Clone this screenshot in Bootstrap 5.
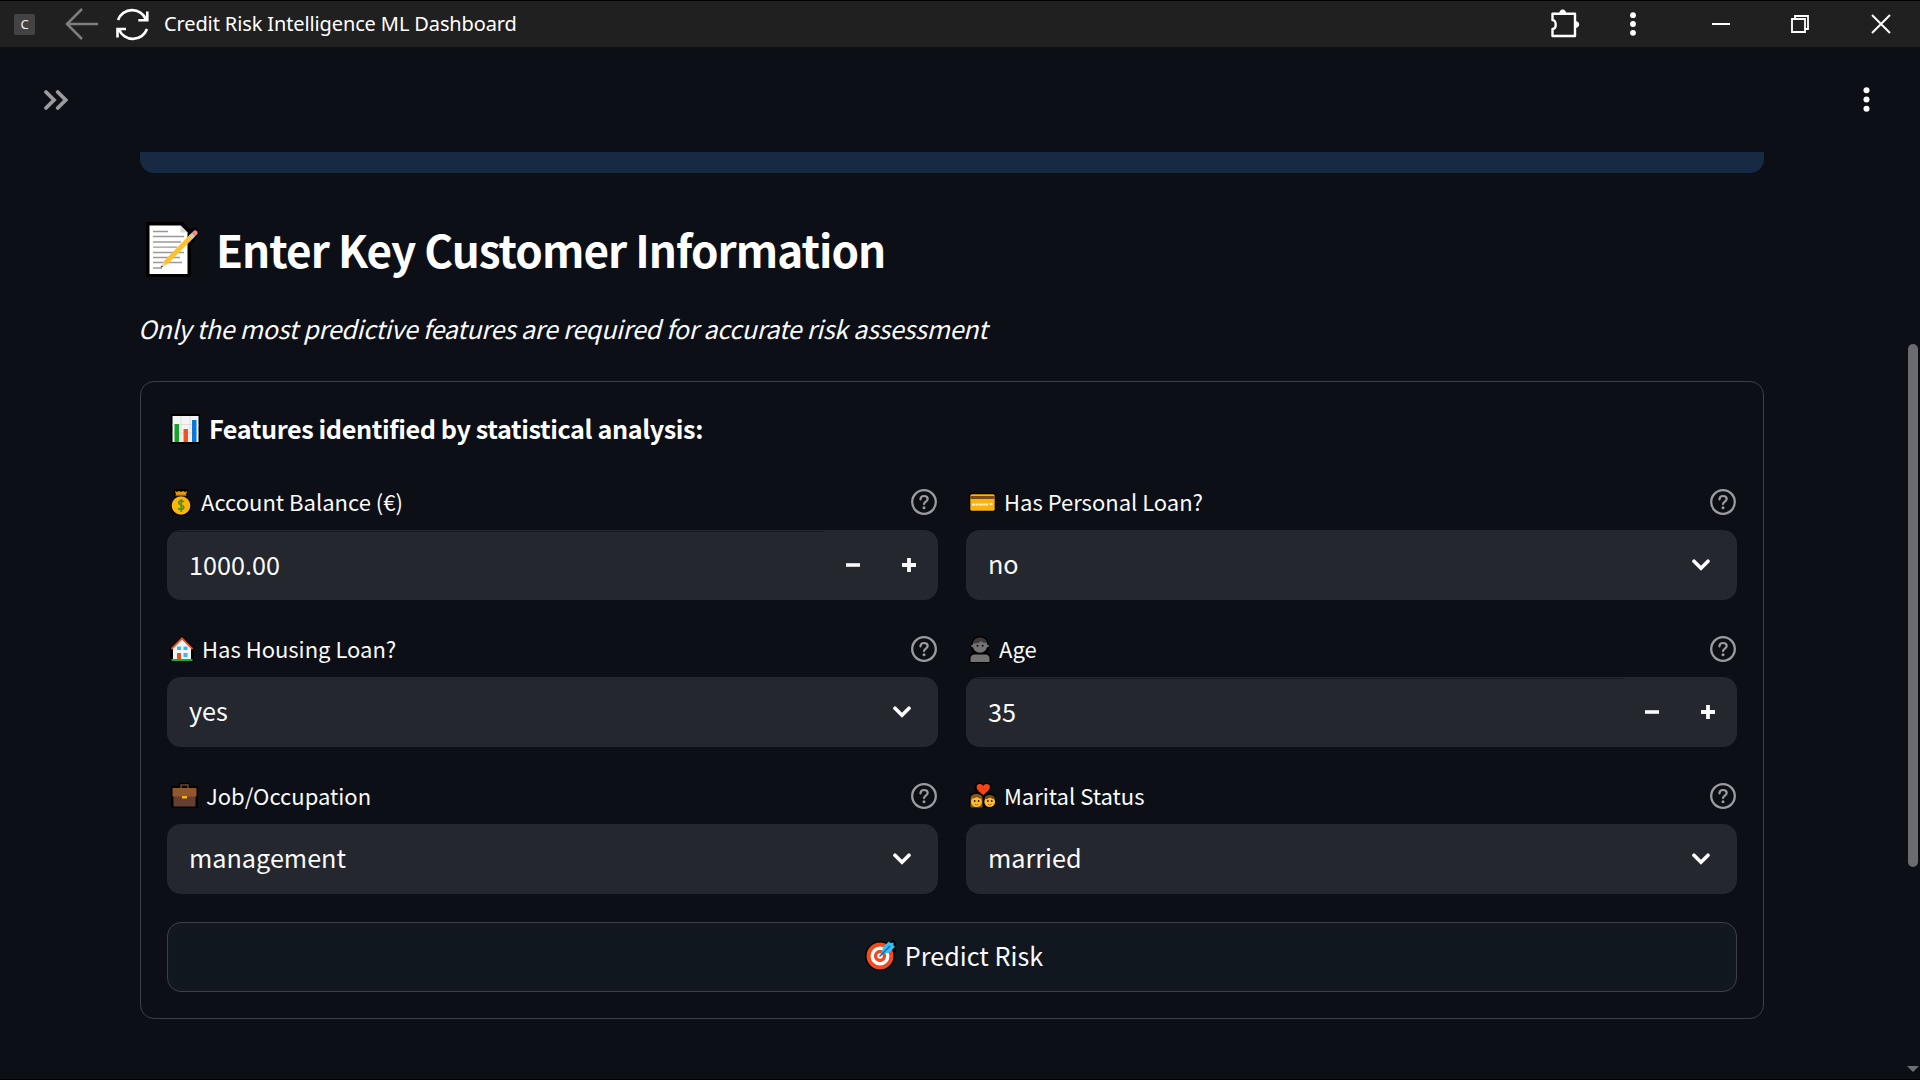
<!DOCTYPE html>
<html lang="en" data-bs-theme="dark">
<head>
<meta charset="utf-8">
<meta name="viewport" content="width=device-width, initial-scale=1">
<title>Credit Risk Intelligence ML Dashboard</title>
<link href="https://cdn.jsdelivr.net/npm/bootstrap@5.3.0/dist/css/bootstrap.min.css" rel="stylesheet">
<style>
  body { width: 1920px; height: 1080px; background: #0c0f16; color: #fafafa; font-family: "Noto Sans CJK SC", "Noto Sans", sans-serif; border-bottom: 1px solid #000; }
  svg { display: block; flex: none; overflow: visible; }
  .titlebar { height: 47px; background: #1f201f; border-top: 1px solid #000; font-family: "Noto Sans", sans-serif; }
  .app-letter { width: 21px; height: 21px; margin-left: 14px; background: #434343; border-radius: 2px; font: 13px/21px "Noto Sans", sans-serif; color: #eee; }
  .app-name { font-size: 20px; line-height: 30px; letter-spacing: -.12px; margin-left: 15px; color: #fff; white-space: nowrap; }
  .puzzle { margin: 0 1px 2px 0; }
  .toolbar-area { height: 105px; padding: 0 50px 0 44px; }
  .page { width: 1624px; margin-left: 140px; }
  .info-edge { height: 21px; background: #162b43; border-radius: 0 0 14px 14px; }
  .heading { margin-top: 41px; height: 70px; font-size: 44px; line-height: 70px; font-weight: 700; letter-spacing: -.95px; }
  .heading .ico, .features .ico { margin-top: 2px; }
  .subtitle { margin: 24px 0 33px -2px; font-size: 25.2px; line-height: 40px; font-style: italic; letter-spacing: -.315px; }
  .form-panel { height: 638px; border: 1px solid #3c3f46; border-radius: 14px; padding: 28px 26px 26px; }
  .features { height: 36px; font-size: 25.2px; line-height: 36px; font-weight: 700; margin-bottom: 37px; letter-spacing: -.39px; }
  .fields { --bs-gutter-x: 28px; --bs-gutter-y: 30px; }
  .field-label { height: 38px; margin-bottom: 9px; font-size: 22px; line-height: 36px; padding-right: 1px; }
  .field-label span { padding-bottom: 2px; }
  .field-box { position: relative; height: 70px; border-radius: 14px; background: #25272f; padding-left: 22px; font-size: 25.2px; line-height: 64px; }
  .field-box span { padding-bottom: 4px; }
  .number-box span { padding-bottom: 2px; }
  .number-box::before { content: ""; position: absolute; top: 1px; left: 9px; right: 113px; height: 1px; background: #16181f; }
  .chev { margin-right: 27px; }
  .steps { gap: 42px; margin-right: 22px; }
  .predict { height: 70px; margin-top: 28px; border: 1px solid #3d4047; border-radius: 14px; background: #10171f; box-shadow: inset 0 0 0 6px #13171f; padding: 0 0 3px 4px; font-size: 25.2px; color: #fafafa; }
  .scroll-thumb { position: absolute; left: 1908px; top: 344px; width: 10px; height: 523px; border-radius: 5px; background: #6b6c70; }
  .scroll-down { position: absolute; left: 1907px; top: 1066px; }
  .ico { margin-right: var(--gap, 8px); }
</style>
</head>
<body class="overflow-hidden position-relative">
<svg width="0" height="0" class="position-absolute">
  <symbol id="help" viewBox="0 0 26 26"><circle cx="13" cy="13" r="11.8" fill="none" stroke="#9b9ca0" stroke-width="2.3"/><path d="M9.4 10.3C9.6 8.2 11 7 13 7s3.7 1.2 3.7 3.1c0 2.4-3.7 2.6-3.7 5" fill="none" stroke="#9b9ca0" stroke-width="2.2" stroke-linecap="round"/><circle cx="13" cy="18.8" r="1.5" fill="#9b9ca0"/></symbol>
  <symbol id="chevron" viewBox="0 0 18 12"><path d="M2 2.2l7 7 7-7" fill="none" stroke="#fff" stroke-width="3.6" stroke-linecap="round"/></symbol>
  <symbol id="minus" viewBox="0 0 14 14"><path d="M0 7h14" stroke="#fafafa" stroke-width="3.6"/></symbol>
  <symbol id="plus" viewBox="0 0 14 14"><path d="M0 7h14M7 0v14" stroke="#fafafa" stroke-width="3.8"/></symbol>
  <symbol id="dots" viewBox="0 0 6 24"><g fill="#fff"><circle cx="3" cy="3.2" r="2.9"/><circle cx="3" cy="12" r="2.9"/><circle cx="3" cy="20.8" r="2.9"/></g></symbol>
</svg>

<header class="titlebar d-flex align-items-center">
  <div class="app-letter text-center">C</div>
  <svg width="33" height="32" style="margin-left:30px" viewBox="0 0 33 32" fill="none" stroke="#7d7e7d" stroke-width="2.5"><path d="M33 16H2M17 1L2 16l15 15"/></svg>
  <svg width="33" height="34" style="margin-left:18px" viewBox="0 0 33 34" fill="none" stroke="#fff" stroke-width="2.6"><path d="M2 13A15 15 0 0 1 30 12.500M31.300 4.500v8.800h-9M31 22A15 15 0 0 1 3 22.500M1.500 30.500v-8.500h8.500"/></svg>
  <div class="app-name"><span>Credit Risk Intelligence ML Dashboard</span></div>
  <div class="d-flex align-items-center ms-auto">
    <svg class="puzzle" width="29" height="29" viewBox="0 0 29 29" fill="none" stroke="#fff" stroke-width="2.4" stroke-linejoin="round"><path d="M2.500 4.700H25v22.300H2.500v-7c2 0 3.200-2 3.200-4.500S4.500 11 2.500 11z"/><path d="M9.200 4.500C9.200 2.200 10.700.5 12.700.5s3.500 1.700 3.500 4zM25.200 12c2.200 0 4 1.500 4 3.500s-1.800 3.500-4 3.500z" fill="#fff" stroke="none"/></svg>
    <svg width="6" height="24" style="margin-left:50px"><use href="#dots"/></svg>
    <svg width="18" height="18" style="margin-left:76px"><path d="M0 9h18" stroke="#fff" stroke-width="2"/></svg>
    <svg width="18" height="18" style="margin-left:61px" fill="none" stroke="#fff" stroke-width="1.800"><path d="M1 4h13v13H1zM4 4V1h13v13h-3"/></svg>
    <svg width="18" height="18" style="margin:0 30px 0 63px"><path d="M0 0l18 18M18 0L0 18" stroke="#fff" stroke-width="2"/></svg>
  </div>
</header>

<div class="toolbar-area d-flex justify-content-between align-items-center">
  <svg width="24" height="20" viewBox="0 0 24 20" fill="none" stroke="#9b9ca0" stroke-width="3.800" stroke-linecap="round"><path d="M2 2l8 8-8 8M13.700 2l8 8-8 8"/></svg>
  <svg width="7" height="25"><use href="#dots"/></svg>
</div>

<main class="page">
  <div class="info-edge"></div>
  <h1 class="heading d-flex align-items-center mb-0" style="--gap:17px">
    <svg class="ico" width="53" height="56" style="margin-left:6px" viewBox="0 0 53 56"><path d="M0 0h37l6 7 5-1c4-1 6 3 4 7L45 23v32H0z" fill="#000"/><path d="M3.500 3.500h31l7 7v41.500h-38z" fill="#fff"/><path d="M34.500 3.500v7h7z" fill="#dadada"/><path d="M7 9.500h15M7 14.500h31M7 20h28M7 25.200h24M7 30.500h31M7 35.500h27M7 40.500h29M7 46h9" stroke="#999" stroke-width="1.300"/><path d="M17 40L44 12.500l3.500 3.500L20.500 43z" fill="#fdc02f"/><path d="M43 13.500l3-3 3.500 3.500-3 3z" fill="#c9c9c9"/><path d="M46 10.500l1.500-1.500c2-2 5.500 1 3.500 3.500L49.500 14z" fill="#ef8e7d"/><path d="M17 40l3.500 3-5.500 2.500z" fill="#f9cfa5"/><path d="M15.500 43.500l1.500 1.200-2.500 1z" fill="#333"/></svg>
    <span>Enter Key Customer Information</span>
  </h1>
  <p class="subtitle"><span>Only the most predictive features are required for accurate risk assessment</span></p>

  <section class="form-panel">
    <h2 class="features d-flex align-items-center" style="--gap:9px">
      <svg class="ico" width="29" height="30" style="margin-left:4px" viewBox="0 0 29 30"><path d="M0 0h29v30H0z" fill="#000"/><path d="M1.500 2h26v26h-26z" fill="#f5f5f5"/><path d="M1.500 10.500h26M1.500 19h26M10 2v26M19 2v26" stroke="#dedede"/><path d="M3.500 10H8v18H3.500z" fill="#17a329"/><path d="M12.500 15H17v13h-4.500z" fill="#f7501f"/><path d="M21 6h4.500v22H21z" fill="#0a78d6"/></svg>
      <span>Features identified by statistical analysis:</span>
    </h2>

    <div class="row fields">
      <div class="col-6">
        <div class="field-label d-flex align-items-center" style="--gap:9px">
          <svg class="ico" width="22" height="27" style="margin-left:3px" viewBox="0 0 22 27"><path d="M4 0h14v6l-2 3c7 5 7 17-2 18H8C-1 26-1 14 6 9L4 6z" fill="#000"/><path d="M5 2l2 1 2-1 2 1 2-1 2 1 2-1-1 4H6z" fill="#e69912"/><circle cx="11" cy="16.500" r="9.300" fill="#fdb40b"/><path d="M5.500 6.500h11" stroke="#8f5a16" stroke-width="1.500"/><path d="M14 13.200c-1-1.800-5.200-1.800-5.200.6 0 2.800 5 1.600 5 4.500 0 2.700-4.500 2.700-5.500.7M11.300 10v13" fill="none" stroke="#45921e" stroke-width="1.700"/></svg>
          <span>Account Balance (€)</span><svg class="ms-auto" width="26" height="26"><use href="#help"/></svg>
        </div>
        <div class="field-box number-box d-flex align-items-center"><span>1000.00</span><div class="steps d-flex ms-auto"><svg width="14" height="14"><use href="#minus"/></svg><svg width="14" height="14"><use href="#plus"/></svg></div></div>
      </div>
      <div class="col-6">
        <div class="field-label d-flex align-items-center" style="--gap:8px">
          <svg class="ico" width="27" height="19" style="margin-left:3px" viewBox="0 0 27 19"><rect width="27" height="19" rx="2" fill="#000"/><rect x="1.300" y="1.300" width="24.400" height="16.400" rx="1.500" fill="#fdb10b"/><path d="M1.300 4.500h24.400" stroke="#7a4b18" stroke-width="3"/><path d="M3 11.500h16M20.500 11h3.500" stroke="#fff3cf" stroke-width="2.200" stroke-dasharray="3 .5"/></svg>
          <span>Has Personal Loan?</span><svg class="ms-auto" width="26" height="26"><use href="#help"/></svg>
        </div>
        <div class="field-box d-flex align-items-center"><span>no</span><svg class="chev ms-auto" width="18" height="12"><use href="#chevron"/></svg></div>
      </div>

      <div class="col-6">
        <div class="field-label d-flex align-items-center" style="--gap:8px">
          <svg class="ico" width="24" height="26" style="margin-left:3px" viewBox="0 0 24 26"><path d="M12 0l12 12v14H0V12z" fill="#000"/><path d="M12 3l9 9v12H3V12z" fill="#f3f4f6"/><path d="M1.500 13L12 2.300 22.500 13" fill="none" stroke="#e7542c" stroke-width="1.800"/><path d="M7 10.500h4V14H7zM13.500 10.500h4V14h-4zM13.500 17h4v4h-4z" fill="#3bb7ee"/><path d="M7 17h4v7H7z" fill="#ea4d26"/><path d="M1.500 24h21" stroke="#20a72e" stroke-width="2"/></svg>
          <span>Has Housing Loan?</span><svg class="ms-auto" width="26" height="26"><use href="#help"/></svg>
        </div>
        <div class="field-box d-flex align-items-center"><span>yes</span><svg class="chev ms-auto" width="18" height="12"><use href="#chevron"/></svg></div>
      </div>
      <div class="col-6">
        <div class="field-label d-flex align-items-center" style="--gap:8px">
          <svg class="ico" width="22" height="27" style="margin-left:3px" viewBox="0 0 22 27"><path d="M0 27v-6c0-2 2-4 4-4C-1 10 3 0 11 0s12 10 7 17c2 0 4 2 4 4v6z" fill="#000"/><circle cx="11" cy="9.500" r="7.300" fill="#737373"/><path d="M4 7.500C4.500 3 8 1.500 11 1.500c4 0 7 2.500 7 5.500-3.500 0-5-1-6-2-1 1.500-4.500 3-8 2.500z" fill="#3e393b"/><circle cx="3.500" cy="10" r="1.300" fill="#737373"/><circle cx="18.500" cy="10" r="1.300" fill="#737373"/><circle cx="8.500" cy="9.800" r="1" fill="#111"/><circle cx="13.700" cy="9.800" r="1" fill="#111"/><path d="M1.500 26v-3.500c0-3 2-4 4-4h11c2 0 4 1 4 4V26z" fill="#737373"/></svg>
          <span>Age</span><svg class="ms-auto" width="26" height="26"><use href="#help"/></svg>
        </div>
        <div class="field-box number-box d-flex align-items-center"><span>35</span><div class="steps d-flex ms-auto"><svg width="14" height="14"><use href="#minus"/></svg><svg width="14" height="14"><use href="#plus"/></svg></div></div>
      </div>

      <div class="col-6">
        <div class="field-label d-flex align-items-center" style="--gap:8px">
          <svg class="ico" width="27" height="26" style="margin-left:4px" viewBox="0 0 27 26"><path d="M0 3h8V0h11v3h8v22H0z" fill="#000"/><path d="M10 5V2h7v3" fill="none" stroke="#6b4634" stroke-width="1.500"/><path d="M2.500 13h22v10.500h-22z" fill="#653f31"/><path d="M1.500 5h24v8.500h-24z" fill="#93572b"/><path d="M11 13h5v2.500h-5z" fill="#f8b31c"/></svg>
          <span>Job/Occupation</span><svg class="ms-auto" width="26" height="26"><use href="#help"/></svg>
        </div>
        <div class="field-box d-flex align-items-center"><span>management</span><svg class="chev ms-auto" width="18" height="12"><use href="#chevron"/></svg></div>
      </div>
      <div class="col-6">
        <div class="field-label d-flex align-items-center" style="--gap:8px">
          <svg class="ico" width="27" height="26" style="margin-left:3px" viewBox="0 0 27 26"><path d="M0 25V14c0-3 4-5 7-4L6 5c-1-5 6-7 8-3 3-4 10-2 8 4l-2 4c9 0 9 12 2 15z" fill="#000"/><path d="M14.200 12C9 8 7.600 6 7.600 3.800 7.600.7 12.200.1 14.200 3c2-2.900 6.700-2.300 6.700.8 0 2.200-1.500 4.200-6.700 8.200z" fill="#fa4213"/><path d="M1.500 24.500V15c0-5.500 12-5.500 12 0v9.500z" fill="#8a5424"/><circle cx="7.500" cy="18.700" r="5.400" fill="#fdbb2d"/><path d="M2.500 15.500c3 0 4.500-.8 5-1.500 1 .8 2.500 1.500 5 1.500l-1-2.500-4-1.500-4 1.500z" fill="#8a5424"/><circle cx="20.700" cy="18.700" r="5.400" fill="#fdbb2d"/><path d="M15.500 16c0-5.500 10.500-5.500 10.500 0-2 0-4-.5-5-1.800-1 1.300-3 1.800-5.500 1.800z" fill="#71481f"/><g fill="#2b1a0c"><circle cx="5.700" cy="18" r=".9"/><circle cx="9.600" cy="18" r=".9"/><circle cx="18.900" cy="18" r=".9"/><circle cx="22.700" cy="18" r=".9"/></g><path d="M5.800 21.300q1.800 1.300 3.500 0M19 21.300q1.700 1.300 3.500 0" fill="none" stroke="#a2540f" stroke-width=".8"/></svg>
          <span>Marital Status</span><svg class="ms-auto" width="26" height="26"><use href="#help"/></svg>
        </div>
        <div class="field-box d-flex align-items-center"><span>married</span><svg class="chev ms-auto" width="18" height="12"><use href="#chevron"/></svg></div>
      </div>
    </div>

    <button class="predict btn w-100 d-flex align-items-center justify-content-center" style="--gap:9px">
      <svg class="ico" width="31" height="31" viewBox="0 0 31 31"><circle cx="15" cy="16" r="15" fill="#000"/><path d="M20 6l8-6 3 3v9l-8 3z" fill="#000"/><circle cx="15" cy="16" r="13.500" fill="#f04b20"/><circle cx="15" cy="16" r="7.800" fill="none" stroke="#fff" stroke-width="3.300"/><circle cx="15" cy="16" r="2.700" fill="#fff"/><path d="M16.500 13.500L18 7l6-5.500 1.500 1.500 3-.5v3l1.500 1.300-6 6.200z" fill="#35bdf4"/><path d="M14.500 16.500L25 6" stroke="#116fbd" stroke-width="1.600"/></svg>
      <span>Predict Risk</span>
    </button>
  </section>
</main>

<div class="scroll-thumb"></div>
<svg class="scroll-down" width="12" height="6"><path d="M0 0h12L6 6z" fill="#6f7074"/></svg>
<script src="https://cdn.jsdelivr.net/npm/bootstrap@5.3.0/dist/js/bootstrap.bundle.min.js"></script>
</body>
</html>
